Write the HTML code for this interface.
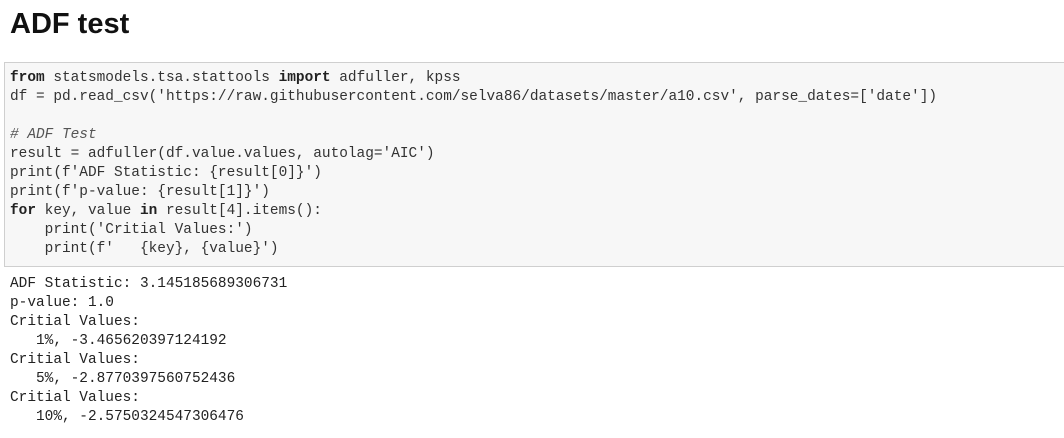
<!DOCTYPE html><html><head><style>
body{margin:0;background:#fff;width:1064px;height:438px;overflow:hidden;position:relative}
h1{position:absolute;left:10px;top:8px;margin:0;font:bold 29px "Liberation Sans",sans-serif;color:#111}
.box{position:absolute;left:4px;top:62px;width:1070px;height:203px;background:#f7f7f7;border:1px solid #cfcfcf;border-right:none}
pre{margin:0;font:14.45px/19px "Liberation Mono",monospace;color:#333;position:absolute;left:10px;white-space:pre}
b{font-weight:bold;color:#222}
i{color:#555}
</style></head><body>
<h1>ADF test</h1>
<div class="box"></div>
<pre style="top:69px"><b>from</b> statsmodels.tsa.stattools <b>import</b> adfuller, kpss
df = pd.read_csv('https://raw.githubusercontent.com/selva86/datasets/master/a10.csv', parse_dates=['date'])

<i># ADF Test</i>
result = adfuller(df.value.values, autolag='AIC')
print(f'ADF Statistic: {result[0]}')
print(f'p-value: {result[1]}')
<b>for</b> key, value <b>in</b> result[4].items():
    print('Critial Values:')
    print(f'   {key}, {value}')</pre>
<pre style="top:275px;color:#222">ADF Statistic: 3.145185689306731
p-value: 1.0
Critial Values:
   1%, -3.465620397124192
Critial Values:
   5%, -2.8770397560752436
Critial Values:
   10%, -2.5750324547306476</pre>
</body></html>
